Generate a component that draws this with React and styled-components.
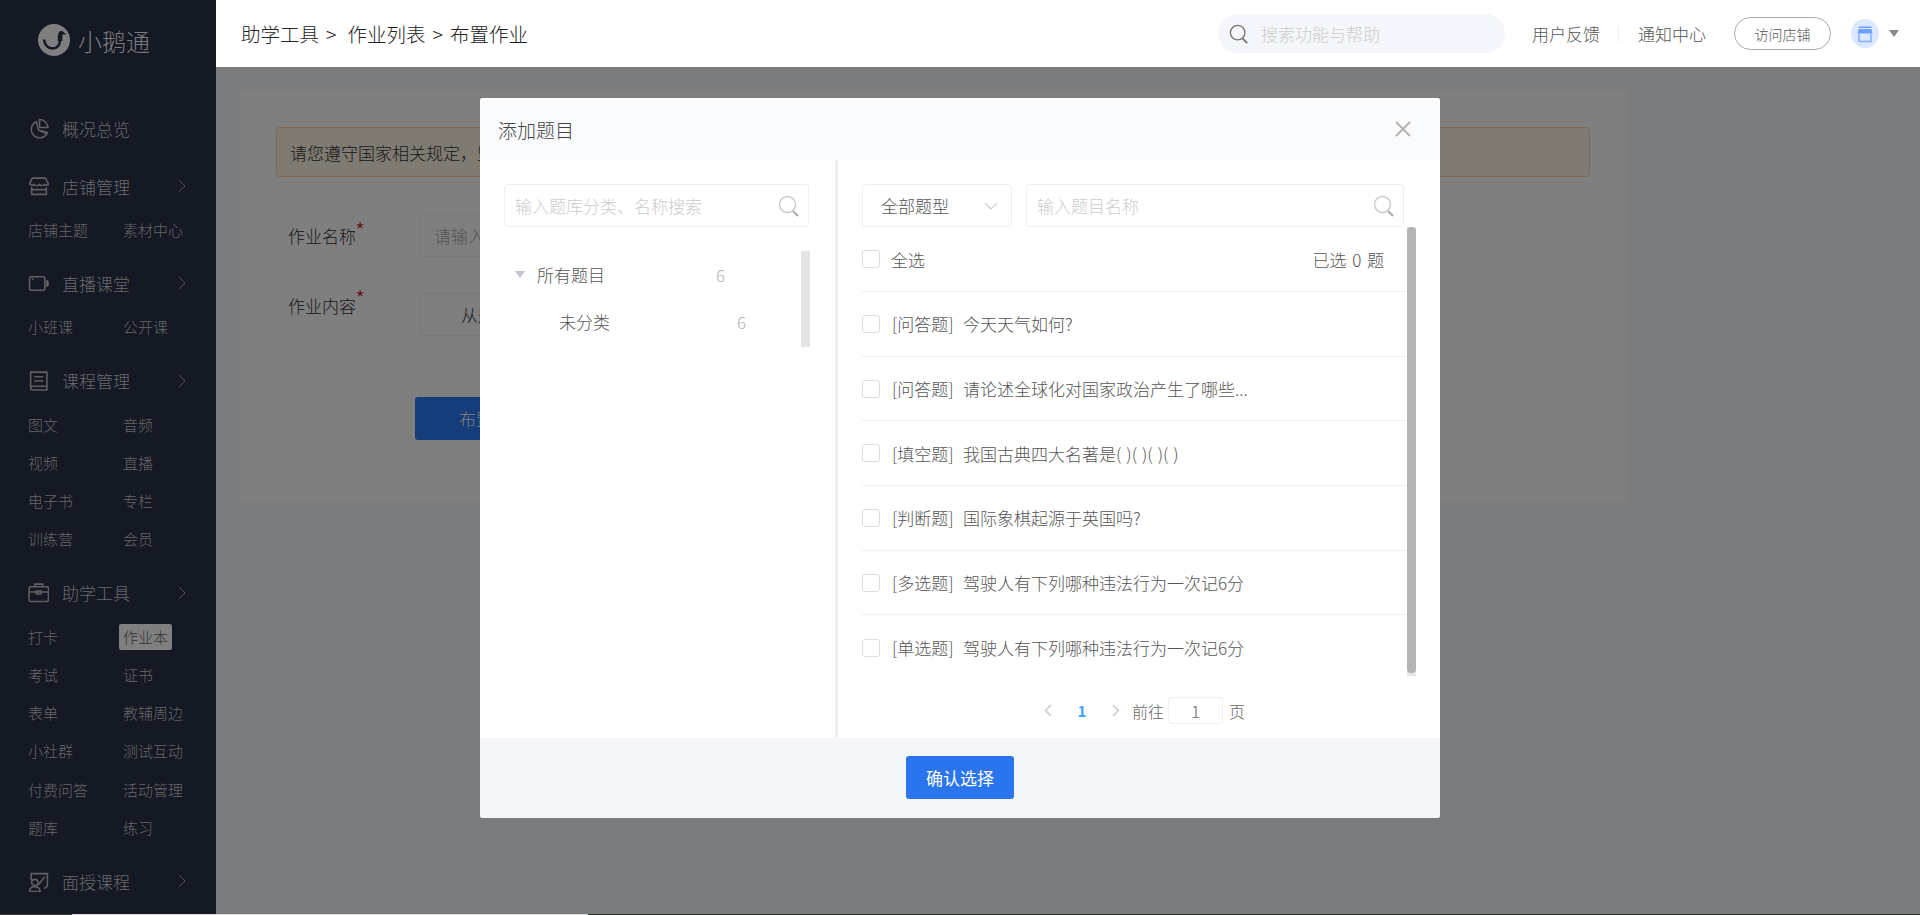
import React from "react";
import styled, { createGlobalStyle } from "styled-components";

const Global = createGlobalStyle`
  html, body { margin: 0; padding: 0; height: 915px; overflow: hidden; }
  body { font-family: "Noto Sans CJK SC", "Noto Sans", sans-serif; font-weight: 300; color: #555; }
  * { box-sizing: border-box; }
`;

const Page = styled.div`
  width: 1920px;
  height: 915px;
  display: flex;
  flex-direction: column;
  overflow: hidden;
`;
const Shell = styled.div`
  display: flex;
  height: 914px;
`;
const EdgeStrip = styled.div`
  height: 1px;
  display: grid;
  grid-template-columns: 72px 516px 1fr;
`;
const EdgeBit = styled.span`
  background: ${(p) => p.$c};
`;

/* Sidebar */
const Sidebar = styled.aside`
  width: 216px;
  flex: none;
  background: #141923;
  overflow: hidden;
`;
const Logo = styled.div`
  height: 80px;
  padding-left: 38px;
  display: flex;
  align-items: center;
  gap: 8px;
`;
const LogoText = styled.span`
  font-size: 24px;
  color: #7b7c7d;
  letter-spacing: 0;
`;
const Menu = styled.nav`
  margin-top: 30px;
`;
const Group = styled.div`
  margin-bottom: ${(p) => (p.$flat ? 22 : 16)}px;
`;
const GroupHead = styled.div`
  height: 36px;
  padding-left: 28px;
  display: flex;
  align-items: center;
  color: #5f6062;
`;
const IconBox = styled.span`
  width: 34px;
  height: 22px;
  display: flex;
  align-items: center;
`;
const GroupLabel = styled.span`
  width: 116px;
  font-size: 17px;
  color: #6a6b6d;
`;
const SubGrid = styled.div`
  margin-top: 7px;
  padding-left: 28px;
  display: grid;
  grid-template-columns: 95px 1fr;
  grid-auto-rows: 38.25px;
  align-items: center;
`;
const SubItem = styled.span`
  font-size: 15px;
  color: ${(p) => (p.$active ? "#333" : "#666769")};
  justify-self: start;
  height: 26px;
  line-height: 26px;
  border-radius: 2px;
  ${(p) => p.$active && "background:#7f7f7f;padding:0 4px;margin-left:-4px;"}
`;

/* Main */
const Main = styled.div`
  flex: 1;
  display: flex;
  flex-direction: column;
  min-width: 0;
`;
const TopBar = styled.header`
  height: 67px;
  flex: none;
  background: #fff;
  padding-left: 25px;
  display: flex;
  align-items: center;
`;
const Crumbs = styled.div`
  width: 977px;
  font-size: 19.5px;
  color: #222;
  display: flex;
  align-items: center;
`;
const CrumbSep = styled.span`
  margin: ${(p) => p.$m};
`;
const TopSearch = styled.div`
  width: 287px;
  height: 39px;
  border-radius: 20px;
  background: #f4f6fb;
  padding-left: 11px;
  display: flex;
  align-items: center;
  gap: 12px;
  color: #777;
`;
const TopPlaceholder = styled.span`
  font-size: 17px;
  color: #ccc;
`;
const TopLink = styled.span`
  font-size: 17px;
  color: #555;
  margin-left: ${(p) => p.$ml}px;
`;
const TopDivider = styled.span`
  width: 1px;
  height: 16px;
  background: #eee;
  margin-left: 18px;
`;
const VisitButton = styled.span`
  width: 97px;
  height: 33px;
  margin-left: 28px;
  border: 1px solid #aaa;
  border-radius: 17px;
  font-size: 14px;
  color: #555;
  display: flex;
  align-items: center;
  justify-content: center;
`;
const Avatar = styled.span`
  width: 28px;
  height: 29px;
  margin-left: 20px;
  border-radius: 50%;
  background: #dbe8ff;
  display: flex;
  align-items: center;
  justify-content: center;
`;
const Caret = styled.span`
  width: 0;
  height: 0;
  margin-left: 10px;
  border-left: 5px solid transparent;
  border-right: 5px solid transparent;
  border-top: 7px solid #8a8a8a;
`;

const Content = styled.main`
  flex: 1;
  position: relative;
  background: #f7f8fb;
  padding: 24px 293px 0 24px;
`;
const Card = styled.section`
  height: 409px;
  background: #fff;
  padding-top: 36px;
`;
const Notice = styled.div`
  height: 50px;
  margin: 0 37px 0 36px;
  padding-left: 13px;
  background: #fef4e4;
  border: 1px solid #f5d6ad;
  border-radius: 3px;
  display: flex;
  align-items: center;
  font-size: 17px;
  color: #333;
`;
const FormRow = styled.div`
  display: flex;
  padding-left: 48px;
  margin-top: ${(p) => p.$mt}px;
`;
const FormLabel = styled.label`
  width: 132px;
  height: 29px;
  font-size: 17px;
  color: #333;
  line-height: ${(p) => p.$lh}px;
  position: relative;
`;
const Star = styled.span`
  position: absolute;
  left: 67px;
  top: ${(p) => p.$top}px;
  line-height: 20px;
  color: #c8102e;
  font-size: 23px;
`;
const FakeInput = styled.div`
  width: 300px;
  height: 43px;
  border: 1px solid #eee;
  border-radius: 3px;
  padding-left: ${(p) => p.$pl}px;
  line-height: 41px;
  font-size: 17px;
  color: ${(p) => p.$c};
`;
const SubmitButton = styled.div`
  width: 200px;
  height: 43px;
  margin: 61px 0 0 175px;
  background: #287af4;
  border-radius: 3px;
  padding-left: 44px;
  line-height: 43px;
  font-size: 17px;
  color: #fff;
`;
const Mask = styled.div`
  position: absolute;
  inset: 0;
  background: rgba(0, 0, 0, 0.5);
`;

/* Modal */
const Modal = styled.div`
  position: absolute;
  top: 31px;
  left: 264px;
  width: 960px;
  height: 720px;
  border-radius: 3px;
  background: #fff;
  display: flex;
  flex-direction: column;
  overflow: hidden;
`;
const ModalHead = styled.div`
  height: 62px;
  flex: none;
  background: #fafbfd;
  padding: 0 28px 0 18px;
  display: flex;
  align-items: center;
  justify-content: space-between;
`;
const ModalTitle = styled.span`
  font-size: 19px;
  color: #444;
`;
const ModalBody = styled.div`
  flex: 1;
  display: flex;
  min-height: 0;
`;
const LeftPane = styled.div`
  width: 358px;
  flex: none;
  border-right: 3px solid #eee;
  padding: 24px 26px 0 24px;
`;
const SearchBox = styled.div`
  width: ${(p) => p.$w}px;
  height: 43px;
  border: 1px solid #eee;
  border-radius: 3px;
  padding: 0 8px 0 10px;
  display: flex;
  align-items: center;
  justify-content: space-between;
  font-size: 17px;
  color: #ccc;
`;
const Tree = styled.div`
  margin-top: 24px;
  height: 96px;
  width: 306px;
  display: flex;
`;
const TreeList = styled.div`
  flex: 1;
  padding-top: 0;
`;
const TreeRow = styled.div`
  height: 47px;
  padding-left: ${(p) => p.$pl}px;
  display: flex;
  align-items: center;
`;
const TreeArrow = styled.span`
  width: 0;
  height: 0;
  margin-right: 12px;
  border-left: 5px solid transparent;
  border-right: 5px solid transparent;
  border-top: 7px solid #bfc4cf;
`;
const TreeLabel = styled.span`
  width: ${(p) => p.$w}px;
  font-size: 17px;
  color: #555;
`;
const TreeCount = styled.span`
  font-size: 17px;
  color: #b4b4b4;
`;
const TreeThumb = styled.div`
  width: 9px;
  background: #e3e3e3;
`;
const RightPane = styled.div`
  flex: 1;
  min-width: 0;
  padding: 24px 0 0 24px;
`;
const Toolbar = styled.div`
  display: flex;
  gap: 14px;
`;
const Select = styled.div`
  width: 150px;
  height: 43px;
  border: 1px solid #eee;
  border-radius: 4px;
  padding: 0 13px 0 18px;
  display: flex;
  align-items: center;
  justify-content: space-between;
  font-size: 17px;
  color: #555;
`;
const ListWrap = styled.div`
  display: flex;
  height: 449px;
  overflow: hidden;
`;
const List = styled.div`
  width: 545px;
`;
const ListScroll = styled.div`
  width: 9px;
  height: 449px;
  background: #e6e6e6;
  position: relative;
`;
const ListThumb = styled.div`
  position: absolute;
  inset: 0 0 3px 0;
  background: #b4b4b4;
  border-radius: 4px;
`;
const HeadRow = styled.div`
  height: 65px;
  padding-right: 23px;
  border-bottom: 1px solid #eee;
  display: flex;
  align-items: center;
  font-size: 17px;
  color: #555;
`;
const Check = styled.span`
  width: 18px;
  height: 18px;
  flex: none;
  border: 1px solid #ddd;
  border-radius: 3px;
  background: #fff;
`;
const AllLabel = styled.span`
  margin-left: 11px;
  flex: 1;
`;
const SelectedCount = styled.span`
  word-spacing: 2px;
`;
const Row = styled.div`
  height: 64.7px;
  display: flex;
  align-items: center;
  font-size: 17px;
  color: #555;
  word-spacing: 1.2px;
  &:not(:last-child) {
    border-bottom: 1px solid #eee;
  }
`;
const RowType = styled.span`
  width: 71px;
  margin-left: 12px;
  flex: none;
  white-space: nowrap;
`;
const Pager = styled.div`
  margin-top: 21px;
  padding-left: 182px;
  height: 27px;
  display: flex;
  align-items: center;
  font-size: 16px;
  color: #666;
`;
const PageNum = styled.span`
  width: 60px;
  text-align: center;
  color: #409eff;
  font-weight: 700;
  font-size: 15px;
`;
const PagerText = styled.span`
  margin-left: ${(p) => p.$ml}px;
`;
const PageInput = styled.span`
  width: 55px;
  height: 27px;
  margin-left: 4px;
  border: 1px solid #eee;
  border-radius: 4px;
  text-align: center;
  font-size: 17px;
  line-height: 25px;
  color: #666;
`;
const ModalFoot = styled.div`
  height: 80px;
  flex: none;
  background: #f5f6fa;
  display: flex;
  align-items: center;
  justify-content: center;
`;
const Confirm = styled.div`
  width: 108px;
  height: 43px;
  margin-top: -1px;
  background: #2a75ed;
  border-radius: 3px;
  color: #fff;
  font-size: 17px;
  font-weight: 400;
  display: flex;
  align-items: center;
  justify-content: center;
`;

/* Icons */
const Svg = ({ size = 21, children }) => (
  <svg width={size} height={size} viewBox="0 0 20 20" fill="none" stroke="currentColor" strokeWidth="1.5">
    {children}
  </svg>
);
const GooseLogo = () => (
  <svg width="32" height="32" viewBox="0 0 32 32">
    <circle cx="16" cy="16" r="16" fill="#7f7f7f" />
    <path d="M6 15.5C6.5 21 10.5 24.5 14.5 24.5C19 24.5 22 21 22 16V10" fill="none" stroke="#141923" strokeWidth="2.6" />
    <path d="M19.8 14C19.8 8.5 21.5 6.5 24 7C25 7.2 25.5 8 26 8.5L28.5 10.5L24.3 10.5V17H19.8Z" fill="#141923" />
  </svg>
);
const PieIcon = () => (
  <Svg>
    <path d="M8 3.5A8 8 0 1 0 18 15L10 11.5Z" />
    <path d="M11 1.5C15 1.5 18.5 4.5 19 9H11Z" />
    <path d="M12 12L19 14" />
  </Svg>
);
const StoreIcon = () => (
  <Svg>
    <path d="M4 2H16.5L19.5 7.5C19 9 17.5 9 16 8C14.5 9.5 12.5 9.5 11 8C9.5 9.5 7 9.5 5.5 8C4 9 2 9 1.5 7.5Z" />
    <path d="M3.5 10.5V17.5H17.5V10.5M3.5 13H17.5" />
  </Svg>
);
const CameraIcon = () => (
  <Svg>
    <rect x="1.5" y="3.5" width="14.5" height="13" rx="1.5" />
    <path d="M4 6H5.5" />
    <path d="M18 7.5C19.5 7.5 19.5 12.5 18 12.5Z" />
  </Svg>
);
const BookIcon = () => (
  <Svg>
    <path d="M2.5 17V2H18V19H4.5C3 19 2.5 18 2.5 17ZM2.5 17C2.5 16 3.5 15.5 4.5 15.5H18" />
    <path d="M6 6.5H14.5M6 10.5H14.5" />
  </Svg>
);
const CaseIcon = () => (
  <Svg>
    <rect x="1" y="4.5" width="18.5" height="14" rx="1.5" />
    <path d="M6.5 4.5V2H14V4.5M1 9.5H19.5" />
    <path d="M8 8.5H12.5V11.5H8Z" />
  </Svg>
);
const FaceIcon = () => (
  <Svg>
    <path d="M3 9V2.5H18.5V13C18.5 15 17 16 15 16.5" />
    <circle cx="6.5" cy="11" r="3" />
    <path d="M1.5 19.5C1.5 16.5 3.5 15 6.5 15C9.5 15 11.5 16.5 11.5 19.5Z" />
    <path d="M10 13L16 5.5" />
  </Svg>
);
const Chevron = () => (
  <svg width="8" height="14" viewBox="0 0 8 14" fill="none" stroke="#505255" strokeWidth="1">
    <path d="M1 1L7 7L1 13" />
  </svg>
);
const SearchGlyph = ({ size = 22, color = "#c9c9c9", sw = 1.4 }) => (
  <svg width={size} height={size} viewBox="0 0 22 22" fill="none" stroke={color} strokeWidth={sw}>
    <circle cx="9.5" cy="9.5" r="8" />
    <path d="M15 16L20 21" strokeWidth={sw + 0.6} stroke={color === "#c9c9c9" ? "#aaa" : color} />
  </svg>
);
const CloseIcon = () => (
  <svg width="18" height="18" viewBox="0 0 18 18" fill="none" stroke="#b3b3b3" strokeWidth="2">
    <path d="M2 2L16 16M16 2L2 16" />
  </svg>
);
const DownIcon = () => (
  <svg width="14" height="8" viewBox="0 0 14 8" fill="none" stroke="#ccc" strokeWidth="1.1">
    <path d="M1 1L7 7L13 1" />
  </svg>
);
const PagerChevron = ({ left }) => (
  <svg width="8" height="13" viewBox="0 0 8 13" fill="none" stroke="#c6cbd6" strokeWidth="1.6">
    <path d={left ? "M7 1L1.5 6.5L7 12" : "M1 1L6.5 6.5L1 12"} />
  </svg>
);
const StoreFill = () => (
  <svg width="18" height="18" viewBox="0 0 18 18">
    <path d="M2.5 1.5H15.5V3H2.5Z" fill="#6ea0fb" />
    <path d="M2.5 4H15.5L16.5 8.5H1.5Z" fill="#6ea0fb" />
    <path d="M3 9V16.5H15V9" fill="none" stroke="#85b0fb" strokeWidth="1.5" />
  </svg>
);

const menu = [
  { label: "概况总览", icon: <PieIcon />, flat: true },
  { label: "店铺管理", icon: <StoreIcon />, subs: ["店铺主题", "素材中心"] },
  { label: "直播课堂", icon: <CameraIcon />, subs: ["小班课", "公开课"] },
  { label: "课程管理", icon: <BookIcon />, subs: ["图文", "音频", "视频", "直播", "电子书", "专栏", "训练营", "会员"] },
  { label: "助学工具", icon: <CaseIcon />, subs: ["打卡", "作业本", "考试", "证书", "表单", "教辅周边", "小社群", "测试互动", "付费问答", "活动管理", "题库", "练习"] },
  { label: "面授课程", icon: <FaceIcon />, subs: [] },
];

const questions = [
  ["[问答题]", "今天天气如何?"],
  ["[问答题]", "请论述全球化对国家政治产生了哪些..."],
  ["[填空题]", "我国古典四大名著是( )( )( )( )"],
  ["[判断题]", "国际象棋起源于英国吗?"],
  ["[多选题]", "驾驶人有下列哪种违法行为一次记6分"],
  ["[单选题]", "驾驶人有下列哪种违法行为一次记6分"],
];

export default function App() {
  return (
    <Page>
      <Global />
      <Shell>
        <Sidebar>
          <Logo>
            <GooseLogo />
            <LogoText>小鹅通</LogoText>
          </Logo>
          <Menu>
            {menu.map((g) => (
              <Group key={g.label} $flat={g.flat}>
                <GroupHead>
                  <IconBox>{g.icon}</IconBox>
                  <GroupLabel>{g.label}</GroupLabel>
                  {!g.flat && <Chevron />}
                </GroupHead>
                {g.subs && g.subs.length > 0 && (
                  <SubGrid>
                    {g.subs.map((s) => (
                      <SubItem key={s} $active={s === "作业本"}>{s}</SubItem>
                    ))}
                  </SubGrid>
                )}
              </Group>
            ))}
          </Menu>
        </Sidebar>
        <Main>
          <TopBar>
            <Crumbs>
              <span>助学工具</span>
              <CrumbSep $m="0 11px 0 7px">{">"}</CrumbSep>
              <span>作业列表</span>
              <CrumbSep $m="0 7px 0 7px">{">"}</CrumbSep>
              <span>布置作业</span>
            </Crumbs>
            <TopSearch>
              <SearchGlyph size={20} color="#777" sw={1.5} />
              <TopPlaceholder>搜索功能与帮助</TopPlaceholder>
            </TopSearch>
            <TopLink $ml={27}>用户反馈</TopLink>
            <TopDivider />
            <TopLink $ml={19}>通知中心</TopLink>
            <VisitButton>访问店铺</VisitButton>
            <Avatar><StoreFill /></Avatar>
            <Caret />
          </TopBar>
          <Content>
            <Card>
              <Notice>请您遵守国家相关规定，坚持文明用语，禁止发布违法违规内容</Notice>
              <FormRow $mt={37}>
                <FormLabel $lh={43}>作业名称<Star $top={6}>*</Star></FormLabel>
                <FakeInput $c="#aaa" $pl={13}>请输入作业名称</FakeInput>
              </FormRow>
              <FormRow $mt={36}>
                <FormLabel $lh={26}>作业内容<Star $top={-5}>*</Star></FormLabel>
                <FakeInput $c="#333" $pl={40}>从题库选择</FakeInput>
              </FormRow>
              <SubmitButton>布置作业</SubmitButton>
            </Card>
            <Mask />
            <Modal>
              <ModalHead>
                <ModalTitle>添加题目</ModalTitle>
                <CloseIcon />
              </ModalHead>
              <ModalBody>
                <LeftPane>
                  <SearchBox $w={305}>
                    输入题库分类、名称搜索
                    <SearchGlyph />
                  </SearchBox>
                  <Tree>
                    <TreeList>
                      <TreeRow $pl={11}>
                        <TreeArrow />
                        <TreeLabel $w={179}>所有题目</TreeLabel>
                        <TreeCount>6</TreeCount>
                      </TreeRow>
                      <TreeRow $pl={55}>
                        <TreeLabel $w={178}>未分类</TreeLabel>
                        <TreeCount>6</TreeCount>
                      </TreeRow>
                    </TreeList>
                    <TreeThumb />
                  </Tree>
                </LeftPane>
                <RightPane>
                  <Toolbar>
                    <Select>全部题型<DownIcon /></Select>
                    <SearchBox $w={378}>
                      输入题目名称
                      <SearchGlyph />
                    </SearchBox>
                  </Toolbar>
                  <ListWrap>
                    <List>
                      <HeadRow>
                        <Check />
                        <AllLabel>全选</AllLabel>
                        <SelectedCount>已选 0 题</SelectedCount>
                      </HeadRow>
                      {questions.map(([t, q], i) => (
                        <Row key={i}>
                          <Check />
                          <RowType>{t}</RowType>
                          <span>{q}</span>
                        </Row>
                      ))}
                    </List>
                    <ListScroll><ListThumb /></ListScroll>
                  </ListWrap>
                  <Pager>
                    <PagerChevron left />
                    <PageNum>1</PageNum>
                    <PagerChevron />
                    <PagerText $ml={12}>前往</PagerText>
                    <PageInput>1</PageInput>
                    <PagerText $ml={6}>页</PagerText>
                  </Pager>
                </RightPane>
              </ModalBody>
              <ModalFoot>
                <Confirm>确认选择</Confirm>
              </ModalFoot>
            </Modal>
          </Content>
        </Main>
      </Shell>
      <EdgeStrip>
        <EdgeBit $c="#3a3f3a" />
        <EdgeBit $c="#dcdcdc" />
        <EdgeBit $c="#2f3528" />
      </EdgeStrip>
    </Page>
  );
}
